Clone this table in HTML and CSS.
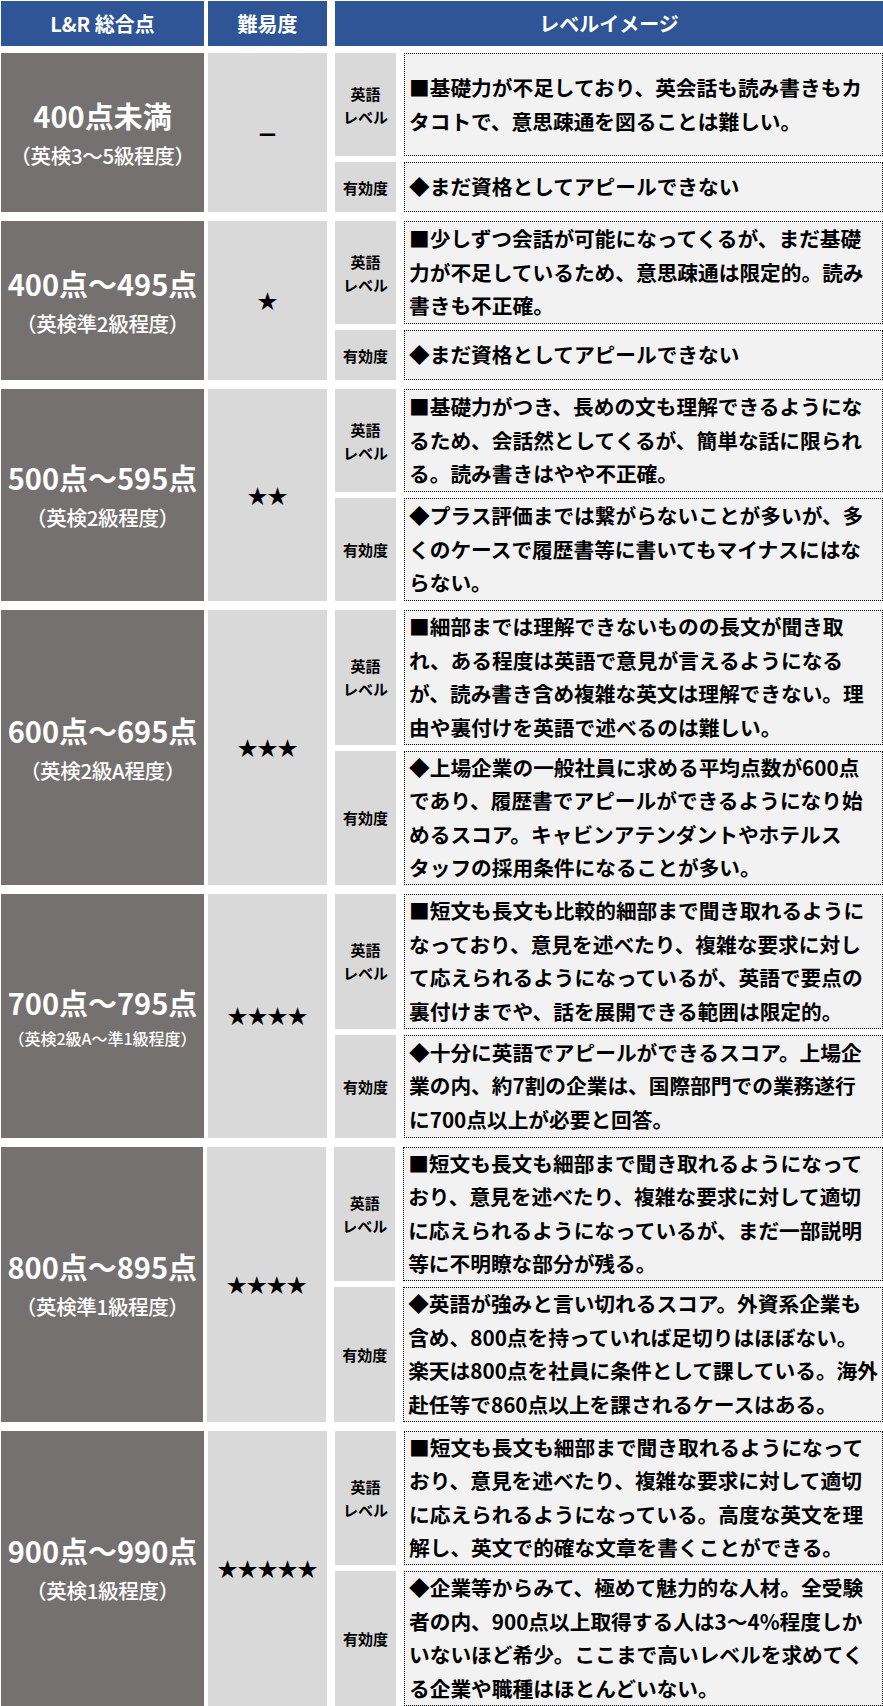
FILE: index.html
```html
<!DOCTYPE html>
<html lang="ja">
<head>
<meta charset="utf-8">
<title>TOEIC L&amp;R レベルイメージ</title>
<link rel="stylesheet" href="styles.css">
</head>
<body>
<div class="table">
  <div class="head">
    <div class="h c1">L&amp;R 総合点</div>
    <div class="h c2">難易度</div>
    <div class="h c3">レベルイメージ</div>
  </div>

  <div class="row">
    <div class="score"><div class="main">400点未満</div><div class="sub">（英検3～5級程度）</div></div>
    <div class="diff dash">－</div>
    <div class="details">
      <div class="item">
        <div class="label">英語<br>レベル</div>
        <div class="text t3"><p>■基礎力が不足しており、英会話も読み書きもカ<br>タコトで、意思疎通を図ることは難しい。</p></div>
      </div>
      <div class="item">
        <div class="label">有効度</div>
        <div class="text t1"><p>◆まだ資格としてアピールできない</p></div>
      </div>
    </div>
  </div>

  <div class="row">
    <div class="score"><div class="main">400点～495点</div><div class="sub">（英検準2級程度）</div></div>
    <div class="diff">★</div>
    <div class="details">
      <div class="item">
        <div class="label">英語<br>レベル</div>
        <div class="text t3"><p>■少しずつ会話が可能になってくるが、まだ基礎<br>力が不足しているため、意思疎通は限定的。読み<br>書きも不正確。</p></div>
      </div>
      <div class="item">
        <div class="label">有効度</div>
        <div class="text t1"><p>◆まだ資格としてアピールできない</p></div>
      </div>
    </div>
  </div>

  <div class="row">
    <div class="score"><div class="main">500点～595点</div><div class="sub">（英検2級程度）</div></div>
    <div class="diff">★★</div>
    <div class="details">
      <div class="item">
        <div class="label">英語<br>レベル</div>
        <div class="text t3"><p>■基礎力がつき、長めの文も理解できるようにな<br>るため、会話然としてくるが、簡単な話に限られ<br>る。読み書きはやや不正確。</p></div>
      </div>
      <div class="item">
        <div class="label">有効度</div>
        <div class="text t3"><p>◆プラス評価までは繋がらないことが多いが、多<br>くのケースで履歴書等に書いてもマイナスにはな<br>らない。</p></div>
      </div>
    </div>
  </div>

  <div class="row">
    <div class="score"><div class="main">600点～695点</div><div class="sub">（英検2級A程度）</div></div>
    <div class="diff">★★★</div>
    <div class="details">
      <div class="item">
        <div class="label">英語<br>レベル</div>
        <div class="text t4"><p>■細部までは理解できないものの長文が聞き取<br>れ、ある程度は英語で意見が言えるようになる<br>が、読み書き含め複雑な英文は理解できない。理<br>由や裏付けを英語で述べるのは難しい。</p></div>
      </div>
      <div class="item">
        <div class="label">有効度</div>
        <div class="text t4"><p>◆上場企業の一般社員に求める平均点数が600点<br>であり、履歴書でアピールができるようになり始<br>めるスコア。キャビンアテンダントやホテルス<br>タッフの採用条件になることが多い。</p></div>
      </div>
    </div>
  </div>

  <div class="row">
    <div class="score"><div class="main">700点～795点</div><div class="sub small">（英検2級A～準1級程度）</div></div>
    <div class="diff">★★★★</div>
    <div class="details">
      <div class="item">
        <div class="label">英語<br>レベル</div>
        <div class="text t4"><p>■短文も長文も比較的細部まで聞き取れるように<br>なっており、意見を述べたり、複雑な要求に対し<br>て応えられるようになっているが、英語で要点の<br>裏付けまでや、話を展開できる範囲は限定的。</p></div>
      </div>
      <div class="item">
        <div class="label">有効度</div>
        <div class="text t3"><p>◆十分に英語でアピールができるスコア。上場企<br>業の内、約7割の企業は、国際部門での業務遂行<br>に700点以上が必要と回答。</p></div>
      </div>
    </div>
  </div>

  <div class="row">
    <div class="score"><div class="main">800点～895点</div><div class="sub">（英検準1級程度）</div></div>
    <div class="diff">★★★★</div>
    <div class="details">
      <div class="item">
        <div class="label">英語<br>レベル</div>
        <div class="text t4"><p>■短文も長文も細部まで聞き取れるようになって<br>おり、意見を述べたり、複雑な要求に対して適切<br>に応えられるようになっているが、まだ一部説明<br>等に不明瞭な部分が残る。</p></div>
      </div>
      <div class="item">
        <div class="label">有効度</div>
        <div class="text t4"><p>◆英語が強みと言い切れるスコア。外資系企業も<br>含め、800点を持っていれば足切りはほぼない。<br>楽天は800点を社員に条件として課している。海外<br>赴任等で860点以上を課されるケースはある。</p></div>
      </div>
    </div>
  </div>

  <div class="row last">
    <div class="score"><div class="main">900点～990点</div><div class="sub">（英検1級程度）</div></div>
    <div class="diff">★★★★★</div>
    <div class="details">
      <div class="item">
        <div class="label">英語<br>レベル</div>
        <div class="text t4"><p>■短文も長文も細部まで聞き取れるようになって<br>おり、意見を述べたり、複雑な要求に対して適切<br>に応えられるようになっている。高度な英文を理<br>解し、英文で的確な文章を書くことができる。</p></div>
      </div>
      <div class="item">
        <div class="label">有効度</div>
        <div class="text t4"><p>◆企業等からみて、極めて魅力的な人材。全受験<br>者の内、900点以上取得する人は3～4%程度しか<br>いないほど希少。ここまで高いレベルを求めてく<br>る企業や職種はほとんどいない。</p></div>
      </div>
    </div>
  </div>
</div>
</body>
</html>
```

FILE: styles.css
```css
html, body {
  margin: 0;
  padding: 0;
  background: #ffffff;
}

body {
  font-family: "Noto Sans CJK JP", "Noto Sans", sans-serif;
  color: #000000;
}

.table {
  width: 882px;
  padding: 1px 0 0 1px;
  display: flex;
  flex-direction: column;
}

.head {
  display: flex;
  height: 45px;
  margin-bottom: 7px;
}

.h {
  background: #2f5597;
  color: #ffffff;
  font-weight: 700;
  font-size: 20px;
  display: flex;
  align-items: center;
  justify-content: center;
}

.c1 {
  width: 203px;
  margin-right: 4px;
}

.c2 {
  width: 119px;
  margin-right: 8px;
}

.c3 {
  flex: 1;
}

.row {
  display: flex;
  margin-bottom: 9px;
}

.row.last {
  margin-bottom: 0;
}

.score {
  width: 203px;
  margin-right: 4px;
  background: #767171;
  color: #ffffff;
  display: flex;
  flex-direction: column;
  align-items: center;
  justify-content: center;
  white-space: nowrap;
}

.main {
  font-size: 29px;
  font-weight: 700;
  line-height: 44px;
}

.sub {
  font-size: 20.5px;
  font-weight: 500;
  line-height: 36px;
  letter-spacing: -0.3px;
}

.sub.small {
  font-size: 16px;
  line-height: 28px;
  letter-spacing: 0;
}

.diff {
  width: 119px;
  margin-right: 8px;
  background: #d9d9d9;
  display: flex;
  align-items: center;
  justify-content: center;
  font-size: 20px;
  white-space: nowrap;
}

.diff.dash {
  font-size: 22px;
  font-weight: 900;
}

.details {
  flex: 1;
  display: flex;
  flex-direction: column;
  gap: 6px;
}

.item {
  display: flex;
  gap: 8px;
}

.label {
  width: 61px;
  flex: none;
  background: #d9d9d9;
  display: flex;
  align-items: center;
  justify-content: center;
  text-align: center;
  font-size: 15px;
  font-weight: 700;
  line-height: 23px;
}

.text {
  flex: 1;
  box-sizing: border-box;
  border: 1px dotted #000000;
  background: #f2f2f2;
  padding: 0 4px;
  display: flex;
  align-items: center;
  font-size: 20.7px;
  font-weight: 700;
  line-height: 33.6px;
  white-space: nowrap;
}

.text p {
  margin: 0;
}

.t1 {
  height: 50px;
}

.t3 {
  height: 103px;
}

.t4 {
  height: 134.5px;
}
```
